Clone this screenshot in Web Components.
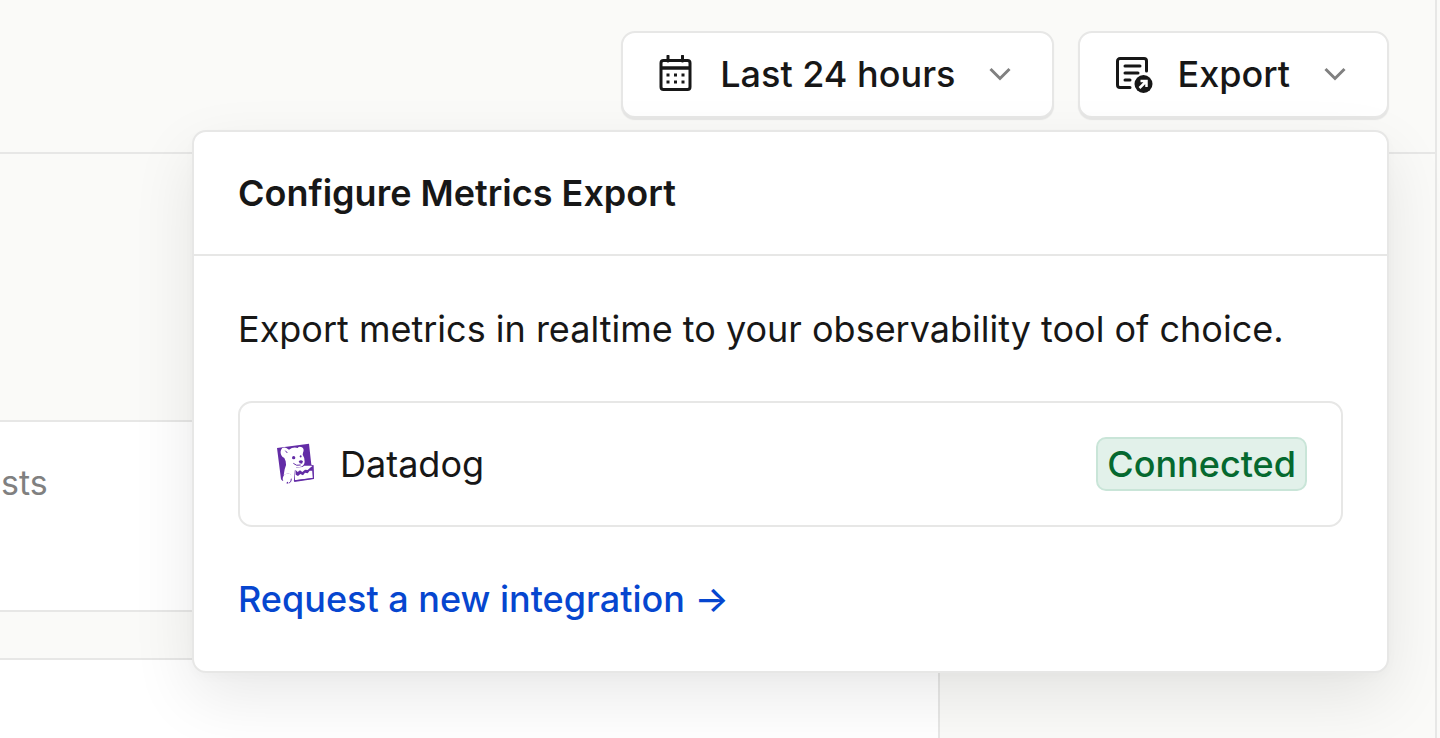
<!DOCTYPE html>
<html lang="en">
<head>
<meta charset="utf-8">
<meta name="viewport" content="width=device-width, initial-scale=1">
<title>Metrics</title>
<style>
  :root {
    --line: #e7e7e6;
    --ink: #171717;
    --muted: #808080;
    --surface: #fafaf8;
  }

  html, body {
    height: 100%;
  }

  body {
    margin: 0;
    overflow: hidden;
    background: var(--surface);
    color: var(--ink);
    font: 36px/54px Inter, "Liberation Sans", sans-serif;
  }
</style>
</head>
<body>

<metrics-page>
  <toolbar-button slot="actions">
    <svg slot="icon" viewBox="0 0 38 38" fill="none" stroke="currentColor" stroke-width="3">
      <rect x="3" y="5.500" width="29" height="29" rx="2.500"/>
      <path d="M10 1v5M24.500 1v5" stroke-linecap="round"/>
      <path d="M3 13h29" stroke-width="3.500"/>
      <path d="M8.500 20h3M16 20h3M23.500 20h3M8.500 27h3M16 27h3M23.500 27h3"/>
    </svg>
    Last 24 hours
  </toolbar-button>

  <export-menu slot="actions">
    <svg slot="icon" viewBox="0 0 38 38" fill="none" stroke="currentColor" stroke-width="3" stroke-linecap="round">
      <path d="M15 32.500H5a2.500 2.500 0 0 1-2.500-2.500V6A2.500 2.500 0 0 1 5 3.500h24a2.500 2.500 0 0 1 2.500 2.500v10"/>
      <path d="M10 11h15M10 18h13M10 25h5"/>
      <circle cx="28.500" cy="29" r="9" fill="currentColor" stroke="none"/>
      <path d="M24.500 33l6.500-6.500M25.500 26h6v6" stroke="#fff" stroke-width="2.500" stroke-linecap="butt"/>
    </svg>
    <span slot="label">Export</span>
    <span slot="title">Configure Metrics Export</span>
    <p slot="intro">Export metrics in realtime to your observability tool of choice.</p>
    <integration-row slot="items" status="Connected">
      <datadog-logo slot="logo"></datadog-logo>
      Datadog
    </integration-row>
    <span slot="link">Request a new integration →</span>
  </export-menu>

  <metric-card>sts</metric-card>
  <metric-card tall></metric-card>
</metrics-page>

<script>
  class BaseElement extends HTMLElement {
    constructor() {
      super()
      this.attachShadow({ mode: 'open' })
    }

    connectedCallback() {
      const template = document.createElement('template')
      template.innerHTML = this.template()
      this.shadowRoot.replaceChildren(template.content.cloneNode(true))
    }
  }

  class MetricsPage extends BaseElement {
    template() {
      return `
        <style>
          :host {
            display: flex;
            flex-direction: column;
            box-sizing: border-box;
            min-height: 100%;
            margin-right: 3px;
            border-right: 2px solid var(--line);
          }

          header {
            display: flex;
            justify-content: flex-end;
            gap: 24px;
            padding: 31px 46px 34px 0;
            border-bottom: 2px solid var(--line);
          }

          main {
            flex: 1;
            display: grid;
            grid-template-columns: 190fr 100fr;
            grid-template-rows: auto 1fr;
            row-gap: 46px;
            padding-top: 266px;
          }

          ::slotted(metric-card) {
            grid-column: 1;
          }
        </style>
        <header><slot name="actions"></slot></header>
        <main><slot></slot></main>
      `
    }
  }

  class MetricCard extends BaseElement {
    template() {
      return `
        <style>
          :host {
            display: block;
            padding: 34px 1px 100px;
            background: #fff;
            border: 2px solid var(--line);
            border-left: 0;
            color: var(--muted);
            font-size: 34px;
          }

          :host([tall]) {
            border-bottom: 0;
            padding: 0;
          }
        </style>
        <slot></slot>
      `
    }
  }

  class ToolbarButton extends BaseElement {
    template() {
      return `
        <style>
          :host {
            display: block;
          }

          button {
            display: flex;
            align-items: center;
            padding: 14px 41px 15px 35px;
            background: #fff;
            border: 2px solid var(--line);
            border-radius: 14px;
            box-shadow: 0 2px 1px #e6e6e5;
            color: inherit;
            font: inherit;
            font-weight: 500;
            white-space: nowrap;
          }

          ::slotted(svg) {
            width: 38px;
            height: 38px;
            margin-right: 24px;
          }

          .chevron {
            width: 22px;
            height: 14px;
            margin-left: 34px;
            color: var(--muted);
          }
        </style>
        <button type="button">
          <slot name="icon"></slot>
          <slot></slot>
          <svg class="chevron" viewBox="0 0 22 14" fill="none" stroke="currentColor" stroke-width="3">
            <path d="M1.500 2l9.500 9.500L20.500 2"/>
          </svg>
        </button>
      `
    }
  }

  class ExportMenu extends BaseElement {
    template() {
      return `
        <style>
          :host {
            display: block;
            position: relative;
          }

          ::slotted(svg) {
            width: 38px;
            height: 38px;
          }

          .panel {
            position: absolute;
            z-index: 1;
            top: calc(100% + 12px);
            right: 0;
            box-sizing: border-box;
            width: 1197px;
            max-width: calc(100vw - 60px);
            background: #fff;
            border: 2px solid var(--line);
            border-radius: 14px;
            box-shadow: 0 24px 64px rgba(0, 0, 0, 0.09), 0 4px 12px rgba(0, 0, 0, 0.02);
          }

          h2 {
            margin: 0;
            padding: 34px 44px;
            border-bottom: 2px solid var(--line);
            font-size: 36px;
            font-weight: 600;
          }

          .body {
            display: flex;
            flex-direction: column;
            align-items: flex-start;
            gap: 45px;
            padding: 46px 44px 45px;
          }

          ::slotted(p) {
            margin: 0;
          }

          ::slotted(integration-row) {
            align-self: stretch;
          }

          a {
            color: #0646cf;
            font-weight: 500;
            text-decoration: none;
          }
        </style>
        <toolbar-button>
          <slot name="icon" slot="icon"></slot>
          <slot name="label"></slot>
        </toolbar-button>
        <section class="panel">
          <h2><slot name="title"></slot></h2>
          <div class="body">
            <slot name="intro"></slot>
            <slot name="items"></slot>
            <a href="#"><slot name="link"></slot></a>
          </div>
        </section>
      `
    }
  }

  class IntegrationRow extends BaseElement {
    template() {
      return `
        <style>
          :host {
            display: flex;
            align-items: center;
            gap: 24px;
            padding: 34px;
            border: 2px solid var(--line);
            border-radius: 14px;
          }

          .badge {
            margin-left: auto;
            padding: 0 9px;
            background: #e2f1ea;
            border: 2px solid #c9e5d8;
            border-radius: 10px;
            color: #05692f;
            font-weight: 500;
            line-height: 50px;
          }
        </style>
        <slot name="logo"></slot>
        <span><slot></slot></span>
        <span class="badge">${this.getAttribute('status')}</span>
      `
    }
  }

  class DatadogLogo extends BaseElement {
    template() {
      return `
        <style>
          :host {
            display: block;
            width: 42px;
            height: 42px;
          }

          svg {
            display: block;
          }
        </style>
        <svg width="42" height="42" viewBox="43 39 126 126" aria-hidden="true">
          <path fill="#632ca6" d="M52 54L148 41L155 104L162 106L163 147L104 156L102 149L94 150Q90 164 80 160L84 153L68 152L64 148Z"/>
          <!-- ears, head and snout -->
          <path fill="#fff" d="M64 60Q68 50 80 54L88 59Q100 50 114 54Q118 48 127 52Q135 58 130 68L129 74Q136 84 135 96Q133 109 120 111L110 112L105 122L103 150L94 150Q98 139 91 132Q82 128 72 136L75 118Q82 106 78 94L74 84L68 80Q60 70 64 60Z"/>
          <!-- haunch -->
          <path fill="#fff" d="M74 134Q88 126 97 138Q101 150 91 160L83 165L86 156L71 153Q66 144 74 134Z"/>
          <path fill="none" stroke="#632ca6" stroke-width="3" d="M88 160Q96 154 95 146"/>
          <!-- sheet with the graph -->
          <path fill="#fff" d="M105 113L128 111L134 107L159 107L160 144L106 151Z"/>
          <path fill="#632ca6" d="M107 119L114 126L121 121L128 126L136 119L144 120L155 110L159 110L159 122L150 122L144 130L136 128L130 136L122 132L115 138L108 134Z"/>
          <path fill="none" stroke="#632ca6" stroke-width="3" d="M106 152L161 145L158 107"/>
          <circle cx="102" cy="83" r="5" fill="#632ca6"/>
          <ellipse cx="123" cy="79" rx="2.500" ry="3.500" fill="#632ca6"/>
          <path fill="#632ca6" d="M117 94Q124 88 130 94L127 101L120 100Z"/>
          <path fill="none" stroke="#632ca6" stroke-width="3" d="M101 100Q110 109 123 105M77 62L83 69"/>
        </svg>
      `
    }
  }

  customElements.define('datadog-logo', DatadogLogo)
  customElements.define('integration-row', IntegrationRow)
  customElements.define('toolbar-button', ToolbarButton)
  customElements.define('export-menu', ExportMenu)
  customElements.define('metric-card', MetricCard)
  customElements.define('metrics-page', MetricsPage)
</script>
</body>
</html>
